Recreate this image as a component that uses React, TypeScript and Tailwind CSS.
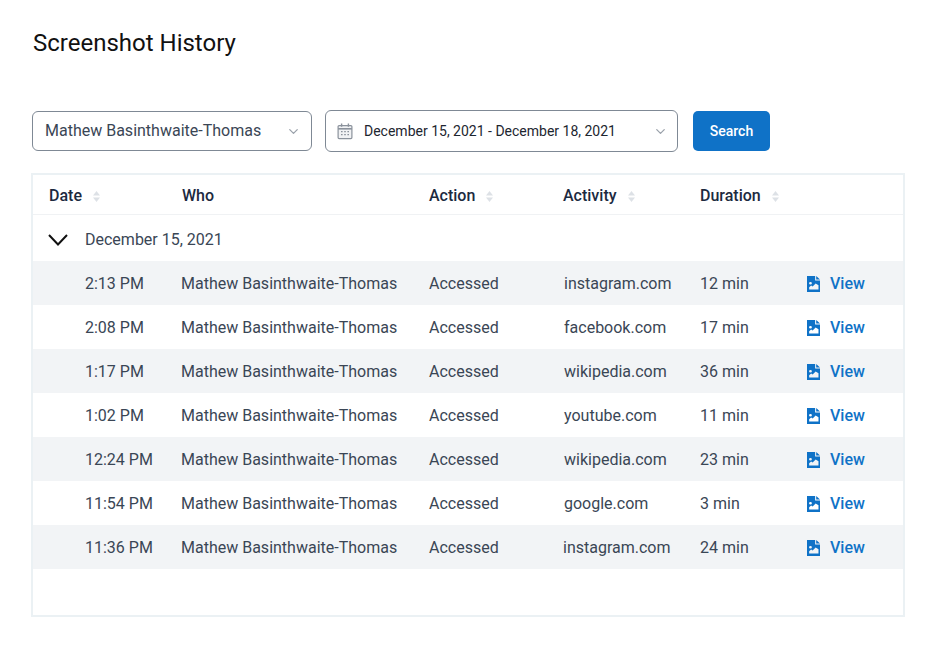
import { ChevronDown } from 'lucide-react';

const who = 'Mathew Basinthwaite-Thomas';

const rows = [
  { time: '2:13 PM', site: 'instagram.com', mins: '12 min', offset: 'pl-[1px]' },
  { time: '2:08 PM', site: 'facebook.com', mins: '17 min', offset: 'pl-[1px]' },
  { time: '1:17 PM', site: 'wikipedia.com', mins: '36 min', offset: 'pl-[1px]' },
  { time: '1:02 PM', site: 'youtube.com', mins: '11 min', offset: 'pl-[1px]' },
  { time: '12:24 PM', site: 'wikipedia.com', mins: '23 min', offset: 'pl-[1px]' },
  { time: '11:54 PM', site: 'google.com', mins: '3 min', offset: 'pl-[1px]' },
  { time: '11:36 PM', site: 'instagram.com', mins: '24 min', offset: '' },
];

function SortIcon() {
  return (
    <svg width="7" height="11" viewBox="0 0 7 11" className="text-[#dde1e6]" fill="currentColor">
      <path d="M3.5 0 7 4.5H0z" />
      <path d="M3.5 11 0 6.5h7z" />
    </svg>
  );
}

function CalendarIcon() {
  return (
    <svg width="16" height="17" viewBox="0 0 16 17" fill="none" stroke="#8b929c" strokeWidth="1.2">
      <rect x="1.1" y="2.6" width="13.8" height="13" rx="1" fill="#f1f2f4" />
      <path d="M1.1 5.8h13.8" strokeWidth="1.6" />
      <path d="M4.6 0.6v3.2M11.4 0.6v3.2" strokeWidth="1.4" />
      <path d="M4 8.6h1.6M7.2 8.6h1.6M10.4 8.6H12M4 11.6h1.6M7.2 11.6h1.6M10.4 11.6H12" strokeWidth="1.1" />
    </svg>
  );
}

function FileImageIcon() {
  return (
    <svg width="13" height="16" viewBox="0 0 12 16" preserveAspectRatio="none" className="text-[#0f72c7]" fill="currentColor">
      <path
        fillRule="evenodd"
        d="M0 0h7.5v4.5H12V16H0zM3.2 6a1.3 1.3 0 1 0 0 2.6 1.3 1.3 0 0 0 0-2.6zM2 13.4h8.6V9.2L8 7.4 5.2 10.4 3.8 9.6 2 11.2z"
      />
      <path d="M8.5 0 12 3.5H8.5z" />
    </svg>
  );
}

function HeaderCell({ label, className, sort = true }: { label: string; className: string; sort?: boolean }) {
  return (
    <div className={`flex items-center gap-[11px] ${className}`}>
      <span className="text-[16px] font-medium text-[#1c2a3f]">{label}</span>
      {sort && <SortIcon />}
    </div>
  );
}

export default function App() {
  return (
    <div className="w-[936px] h-[645px] bg-white overflow-hidden px-8 font-['Roboto',sans-serif]">
      <h1 className="pt-[27px] pl-[1px] h-[111px] text-[24px] leading-[32px] text-[#111]">Screenshot History</h1>

      {/* Filters */}
      <div className="flex items-start">
        <button className="w-[280px] h-[40px] border border-[#7f8995] rounded-[6px] flex items-center justify-between pl-3 pr-[10px] text-[16px] text-[#3a4655]">
          <span>{who}</span>
          <ChevronDown size={15} className="text-[#9aa1aa]" />
        </button>
        <button className="ml-[13px] w-[353px] h-[42px] -mt-[1px] border border-[#7f8995] rounded-[6px] flex items-center pl-[11px] pr-[9px] text-[14px] text-[#1d2630]">
          <CalendarIcon />
          <span className="ml-[11px] flex-1 text-left">December 15, 2021 - December 18, 2021</span>
          <ChevronDown size={15} className="text-[#9aa1aa]" />
        </button>
        <button className="ml-[15px] w-[77px] h-[40px] rounded-[5px] bg-[#0f72c7] text-white text-[14px] font-medium">Search</button>
      </div>

      {/* Table */}
      <div className="mt-[21px] w-[874px] h-[444px] -ml-[1px] border-2 border-[#ebf1f4]">
        <div className="h-[40px] pt-[3px] flex items-center border-b border-[#f0f2f4]">
          <HeaderCell label="Date" className="w-[149px] pl-[16px]" />
          <HeaderCell label="Who" className="w-[247px]" sort={false} />
          <HeaderCell label="Action" className="w-[134px]" />
          <HeaderCell label="Activity" className="w-[137px]" />
          <HeaderCell label="Duration" className="w-[107px]" />
        </div>
        <div className="h-[46px] pt-[4px] flex items-center pl-[15px] text-[16px] text-[#3a4655]">
          <svg width="20" height="12" viewBox="0 0 20 12" fill="none" stroke="#111" strokeWidth="2" className="shrink-0">
            <path d="M1 1l9 9.5L19 1" />
          </svg>
          <span className="ml-[17px]">December 15, 2021</span>
        </div>
        {rows.map((r, i) => (
          <div
            key={r.time}
            className={`h-[44px] pt-[1px] flex items-center text-[16px] text-[#3a4655] ${i % 2 === 0 ? 'bg-[#f2f4f6]' : 'bg-white'}`}
          >
            <span className="w-[150px] pl-[52px] box-border -mr-[2px]">{r.time}</span>
            <span className="w-[248px]">{who}</span>
            <span className="w-[134px]">Accessed</span>
            <span className={`w-[137px] ${r.offset}`}>{r.site}</span>
            <span className="w-[107px]">{r.mins}</span>
            <a className="flex items-center text-[#0f72c7] font-medium">
              <FileImageIcon />
              <span className="ml-[10px]">View</span>
            </a>
          </div>
        ))}
      </div>
    </div>
  );
}
